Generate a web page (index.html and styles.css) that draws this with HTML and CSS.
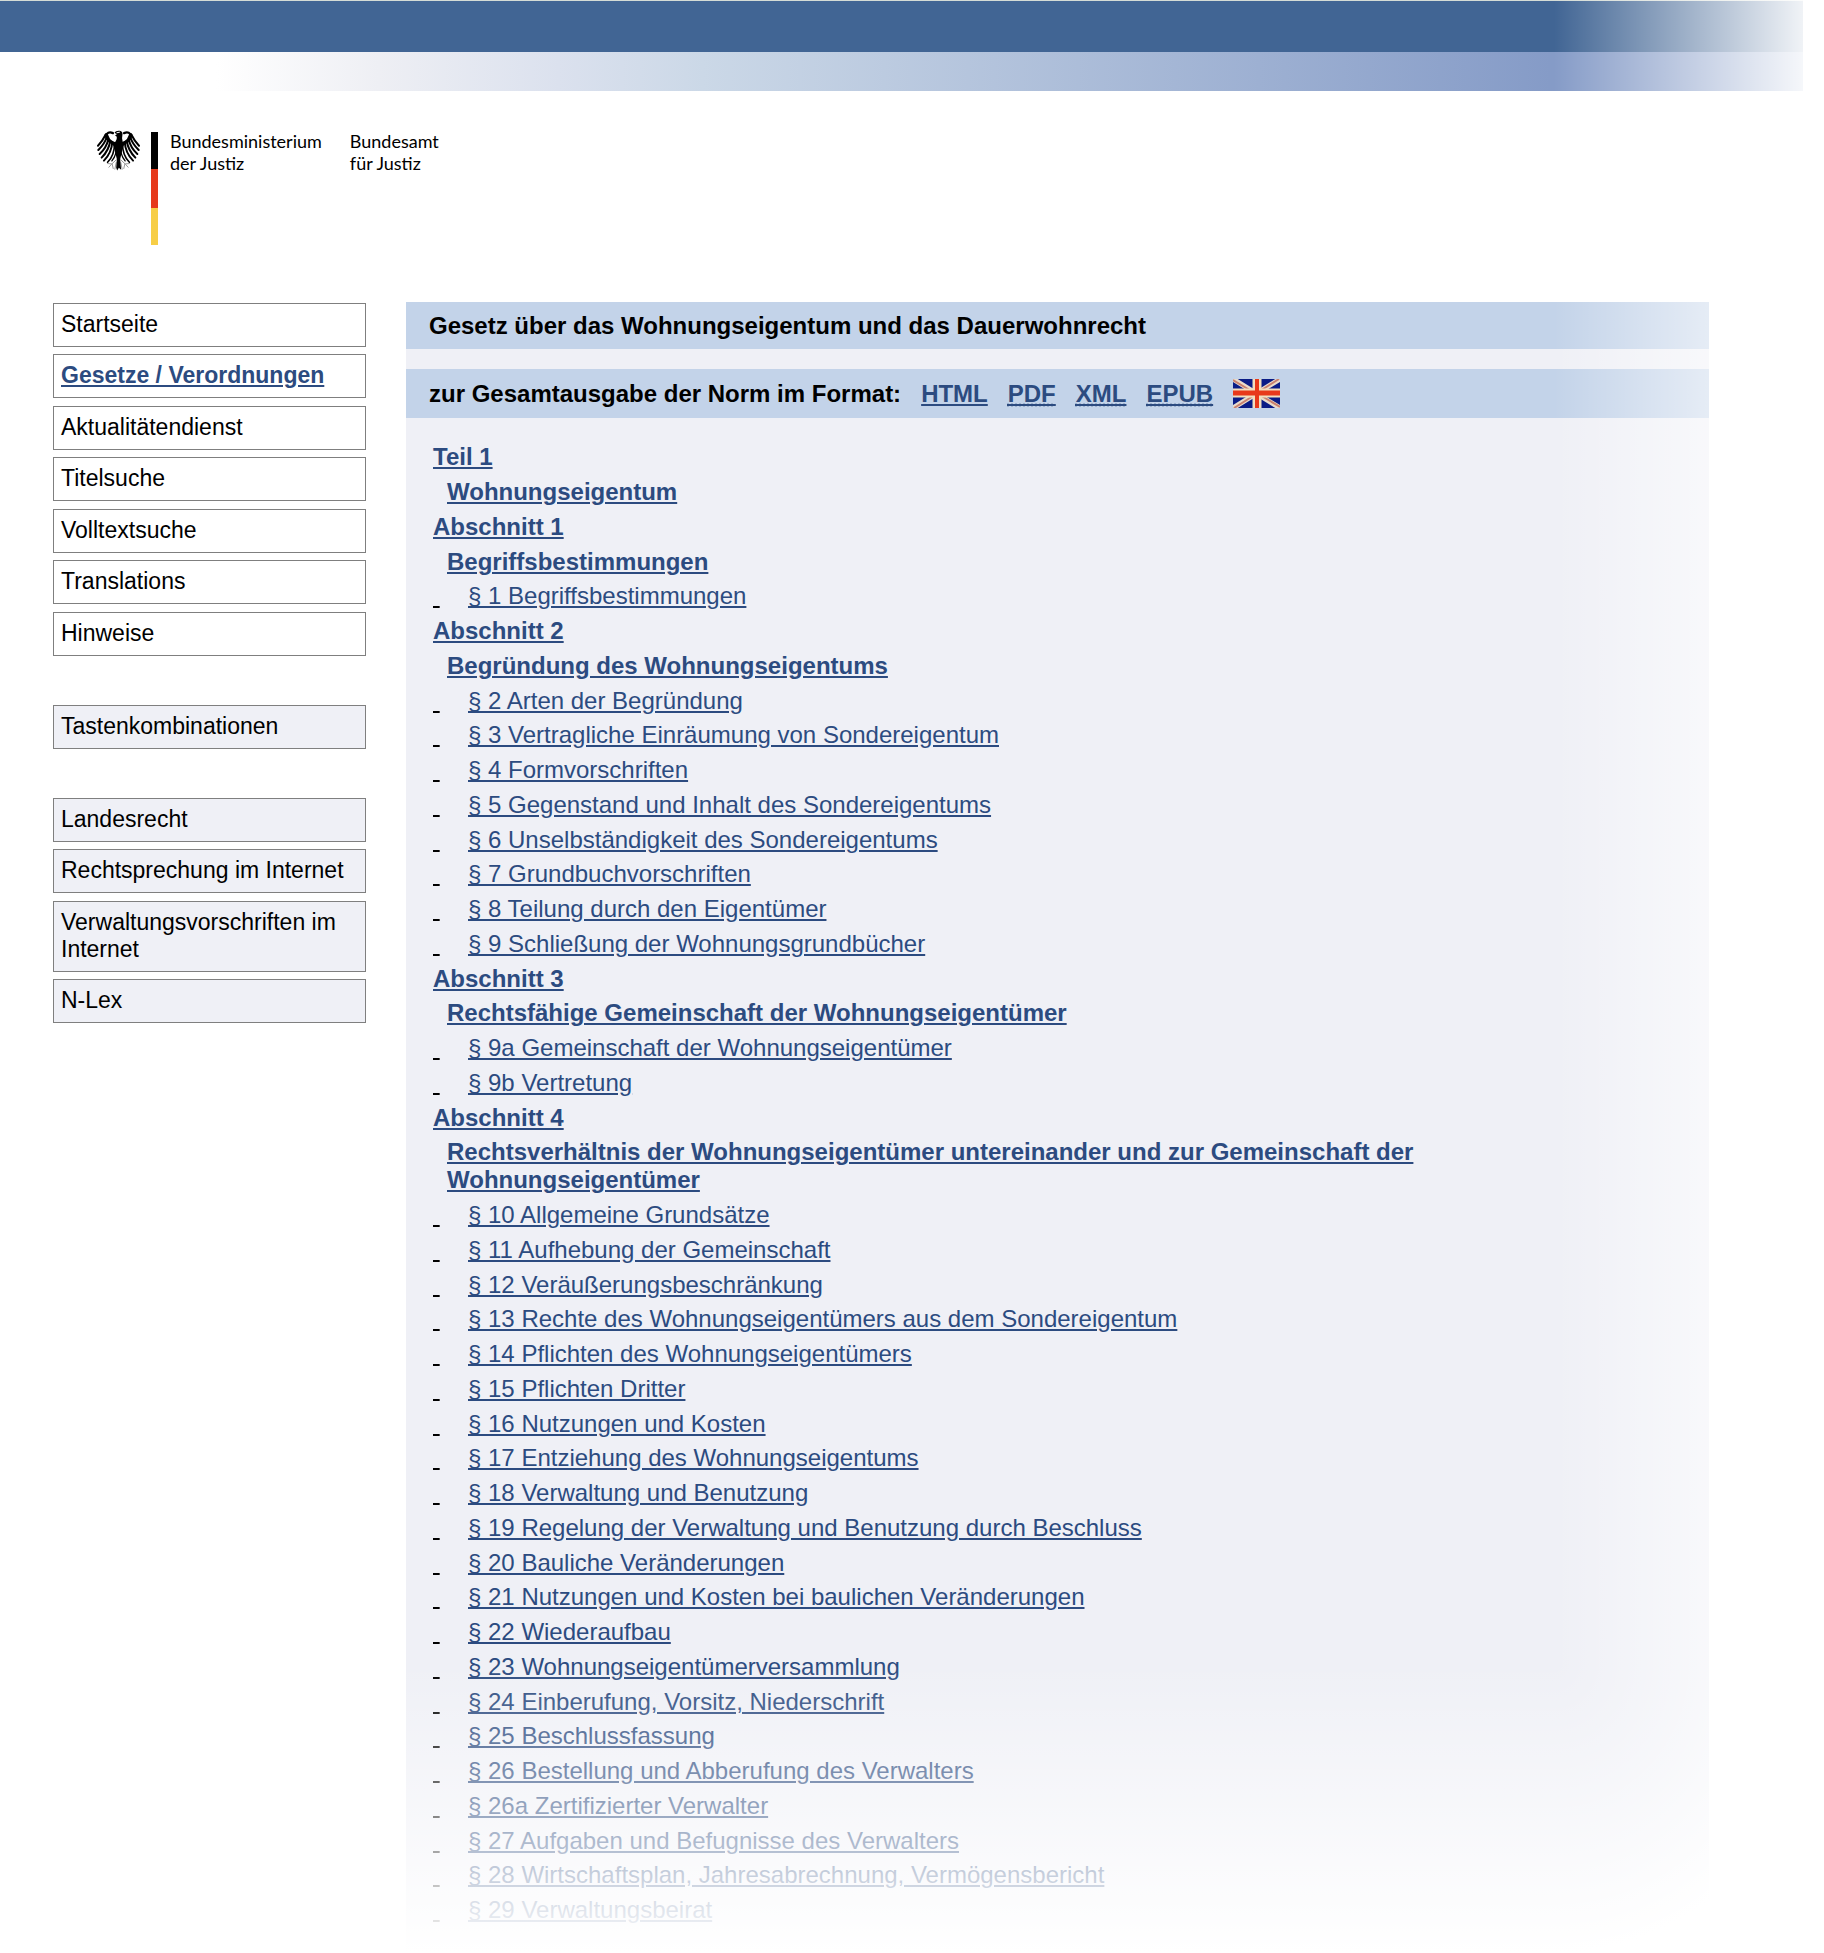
FILE: index.html
```html
<!DOCTYPE html>
<html lang="de">
<head>
    <meta charset="UTF-8">
    <meta name="viewport" content="width=device-width, initial-scale=1.0">
    <title>WEG - Gesetz über das Wohnungseigentum und das Dauerwohnrecht</title>
    <link rel="stylesheet" href="styles.css">
</head>
<body>
<div class="page">
    <div class="topbar"></div>
    <div class="topbar-light"></div>

    <header class="header">
        <svg class="eagle" viewBox="0 0 130 123" aria-hidden="true">
            <g id="wing" fill="none" stroke="#000" stroke-linecap="round">
                <path d="M48 9C38 4 28 8 27 18C29 30 40 38 58 40" stroke-width="7"/>
                <path d="M26 14C19 28 12 38 3 47" stroke-width="6"/>
                <path d="M29 22C24 38 14 50 4 60" stroke-width="6"/>
                <path d="M34 28C30 46 20 61 8 72" stroke-width="6"/>
                <path d="M40 32C37 54 27 70 14 83" stroke-width="6"/>
                <path d="M46 36C45 60 35 78 21 92" stroke-width="6"/>
                <path d="M53 40C53 64 45 84 32 97" stroke-width="5"/>
                <path d="M59 42C60 68 55 82 45 93" stroke-width="4"/>
                <path d="M28 14L36 31L52 42L60 56" stroke-width="10"/>
                <path d="M58 90L45 102L32 101M45 102L36 112M46 103L49 116M58 98L54 118" stroke="#999" stroke-width="3"/>
            </g>
            <use href="#wing" transform="translate(130 0) scale(-1 1)"/>
            <path d="M53 8C56 1 70 -1 76 6C79 12 75 20 76 26L79 42L76 62L70 88L73 120L66 114L61 122L58 114L60 88L54 62L52 42L59 28C61 22 60 17 54 16L60 12Z"/>
            <path d="M59 8L69 6" stroke="#fff" stroke-width="3"/>
        </svg>
        <div class="flag-bar"></div>
        <div class="office">Bundesministerium<br>der Justiz</div>
        <div class="office">Bundesamt<br>für Justiz</div>
    </header>

    <div class="columns">
        <nav class="sidebar">
            <ul class="menu">
                <li><a href="#">Startseite</a></li>
                <li><a href="#" class="current">Gesetze / Verordnungen</a></li>
                <li><a href="#">Aktualitätendienst</a></li>
                <li><a href="#">Titelsuche</a></li>
                <li><a href="#">Volltextsuche</a></li>
                <li><a href="#">Translations</a></li>
                <li><a href="#">Hinweise</a></li>
            </ul>
            <ul class="menu grey">
                <li><a href="#">Tastenkombinationen</a></li>
            </ul>
            <ul class="menu grey">
                <li><a href="#">Landesrecht</a></li>
                <li><a href="#">Rechtsprechung im Internet</a></li>
                <li><a href="#">Verwaltungsvorschriften im Internet</a></li>
                <li><a href="#">N-Lex</a></li>
            </ul>
        </nav>

        <main class="content">
            <h1 class="band">Gesetz über das Wohnungseigentum und das Dauerwohnrecht</h1>
            <h2 class="band formats">
                <span>zur Gesamtausgabe der Norm im Format:</span>
                <a href="#">HTML</a>
                <a href="#"><abbr>PDF</abbr></a>
                <a href="#"><abbr>XML</abbr></a>
                <a href="#"><abbr>EPUB</abbr></a>
                <a href="#" class="flag" aria-label="English">
                    <svg viewBox="0 0 47 29">
                        <rect width="47" height="29" fill="#0a1c86"/>
                        <path d="M0 0L47 29M47 0L0 29" stroke="#e9dccb" stroke-width="5"/>
                        <path d="M0 1L20 13M47 28L27 16M46 0L27 12M1 29L20 17" stroke="#c9806f" stroke-width="2"/>
                        <path d="M24 0V29M0 14H47" stroke="#f1dfbf" stroke-width="9"/>
                        <path d="M24 0V29" stroke="#e8391b" stroke-width="4"/>
                        <path d="M0 14H47" stroke="#e8391b" stroke-width="5"/>
                    </svg>
                </a>
            </h2>

            <ul class="toc">
                <li class="part"><a href="#">Teil 1</a></li>
                <li class="title"><a href="#">Wohnungseigentum</a></li>
                <li class="part"><a href="#">Abschnitt 1</a></li>
                <li class="title"><a href="#">Begriffsbestimmungen</a></li>
                <li class="norm"><u>&nbsp;</u><a href="#">§ 1 Begriffsbestimmungen</a></li>
                <li class="part"><a href="#">Abschnitt 2</a></li>
                <li class="title"><a href="#">Begründung des Wohnungseigentums</a></li>
                <li class="norm"><u>&nbsp;</u><a href="#">§ 2 Arten der Begründung</a></li>
                <li class="norm"><u>&nbsp;</u><a href="#">§ 3 Vertragliche Einräumung von Sondereigentum</a></li>
                <li class="norm"><u>&nbsp;</u><a href="#">§ 4 Formvorschriften</a></li>
                <li class="norm"><u>&nbsp;</u><a href="#">§ 5 Gegenstand und Inhalt des Sondereigentums</a></li>
                <li class="norm"><u>&nbsp;</u><a href="#">§ 6 Unselbständigkeit des Sondereigentums</a></li>
                <li class="norm"><u>&nbsp;</u><a href="#">§ 7 Grundbuchvorschriften</a></li>
                <li class="norm"><u>&nbsp;</u><a href="#">§ 8 Teilung durch den Eigentümer</a></li>
                <li class="norm"><u>&nbsp;</u><a href="#">§ 9 Schließung der Wohnungsgrundbücher</a></li>
                <li class="part"><a href="#">Abschnitt 3</a></li>
                <li class="title"><a href="#">Rechtsfähige Gemeinschaft der Wohnungseigentümer</a></li>
                <li class="norm"><u>&nbsp;</u><a href="#">§ 9a Gemeinschaft der Wohnungseigentümer</a></li>
                <li class="norm"><u>&nbsp;</u><a href="#">§ 9b Vertretung</a></li>
                <li class="part"><a href="#">Abschnitt 4</a></li>
                <li class="title"><a href="#">Rechtsverhältnis der Wohnungseigentümer untereinander und zur Gemeinschaft der Wohnungseigentümer</a></li>
                <li class="norm"><u>&nbsp;</u><a href="#">§ 10 Allgemeine Grundsätze</a></li>
                <li class="norm"><u>&nbsp;</u><a href="#">§ 11 Aufhebung der Gemeinschaft</a></li>
                <li class="norm"><u>&nbsp;</u><a href="#">§ 12 Veräußerungsbeschränkung</a></li>
                <li class="norm"><u>&nbsp;</u><a href="#">§ 13 Rechte des Wohnungseigentümers aus dem Sondereigentum</a></li>
                <li class="norm"><u>&nbsp;</u><a href="#">§ 14 Pflichten des Wohnungseigentümers</a></li>
                <li class="norm"><u>&nbsp;</u><a href="#">§ 15 Pflichten Dritter</a></li>
                <li class="norm"><u>&nbsp;</u><a href="#">§ 16 Nutzungen und Kosten</a></li>
                <li class="norm"><u>&nbsp;</u><a href="#">§ 17 Entziehung des Wohnungseigentums</a></li>
                <li class="norm"><u>&nbsp;</u><a href="#">§ 18 Verwaltung und Benutzung</a></li>
                <li class="norm"><u>&nbsp;</u><a href="#">§ 19 Regelung der Verwaltung und Benutzung durch Beschluss</a></li>
                <li class="norm"><u>&nbsp;</u><a href="#">§ 20 Bauliche Veränderungen</a></li>
                <li class="norm"><u>&nbsp;</u><a href="#">§ 21 Nutzungen und Kosten bei baulichen Veränderungen</a></li>
                <li class="norm"><u>&nbsp;</u><a href="#">§ 22 Wiederaufbau</a></li>
                <li class="norm"><u>&nbsp;</u><a href="#">§ 23 Wohnungseigentümerversammlung</a></li>
                <li class="norm"><u>&nbsp;</u><a href="#">§ 24 Einberufung, Vorsitz, Niederschrift</a></li>
                <li class="norm"><u>&nbsp;</u><a href="#">§ 25 Beschlussfassung</a></li>
                <li class="norm"><u>&nbsp;</u><a href="#">§ 26 Bestellung und Abberufung des Verwalters</a></li>
                <li class="norm"><u>&nbsp;</u><a href="#">§ 26a Zertifizierter Verwalter</a></li>
                <li class="norm"><u>&nbsp;</u><a href="#">§ 27 Aufgaben und Befugnisse des Verwalters</a></li>
                <li class="norm"><u>&nbsp;</u><a href="#">§ 28 Wirtschaftsplan, Jahresabrechnung, Vermögensbericht</a></li>
                <li class="norm"><u>&nbsp;</u><a href="#">§ 29 Verwaltungsbeirat</a></li>
            </ul>
        </main>
    </div>
</div>
</body>
</html>
```
FILE: styles.css
```css
* {
    margin: 0;
    padding: 0;
    box-sizing: border-box;
}

body {
    background-color: #fff;
    color: #000;
    font-family: "Liberation Sans", Arial, sans-serif;
    font-size: 23px;
    line-height: 27px;
}

ul {
    list-style: none;
}

.page {
    position: relative;
    display: flex;
    flex-direction: column;
    min-height: 100vh;
}

/* fades the page out to the right and to the bottom */
.page::after {
    content: "";
    position: absolute;
    inset: 0;
    pointer-events: none;
    background:
        linear-gradient(to right, transparent, #fff) right top / 270px calc(100% - 290px) no-repeat,
        linear-gradient(to bottom, transparent, #fff) left bottom / calc(100% - 270px) 290px no-repeat,
        radial-gradient(100% 100% at 0 0, transparent, #fff) right bottom / 270px 290px no-repeat;
}

.topbar {
    height: 52px;
    margin-right: 21px;
    background-color: #416594;
    border-top: 1px solid #d5dcd6;
}

.topbar-light {
    height: 39px;
    margin-right: 21px;
    background: linear-gradient(to right, #fff 12%, #eeeff4 21%, #dbe1ee 31%, #cbd8e7 39%, #859bc7 86%);
}

.header {
    display: flex;
    align-items: flex-start;
    padding: 39px 97px 57px;
}

.eagle {
    width: 43px;
    height: 41px;
}

.flag-bar {
    width: 7px;
    height: 113px;
    margin: 2px 12px 0 11px;
    background: linear-gradient(#000 0 33%, #e6391b 33% 67%, #f7ce46 67%);
}

.office {
    margin-right: 28px;
    font-family: Lato, "Open Sans", sans-serif;
    font-size: 18px;
    line-height: 22px;
}

.columns {
    display: flex;
    flex: 1;
    gap: 40px;
    padding: 0 115px 0 53px;
}

.sidebar {
    flex: 0 0 313px;
    padding-top: 1px;
}

.menu {
    margin-bottom: 49px;
}

.menu li + li {
    margin-top: 8px;
}

.menu li:nth-child(even) {
    margin-top: 7px;
}

.menu a {
    display: block;
    padding: 7px 7px 8px;
    border: 1px solid #7f7f7f;
    color: #000;
    text-decoration: none;
}

.menu.grey a {
    background-color: #eff0f6;
}

.menu a.current {
    color: #2c4b80;
    font-weight: bold;
    text-decoration: underline;
}

.content {
    flex: 1;
    background-color: #eff0f6;
}

.content a {
    color: #2c4b80;
}

.band {
    padding: 10px 23px;
    background-color: #c3d3e9;
    font-size: 24px;
    font-weight: bold;
}

.formats {
    display: flex;
    align-items: center;
    gap: 20px;
    margin-top: 20px;
}

.formats abbr {
    text-decoration: underline dotted;
}

.flag svg {
    display: block;
    width: 47px;
    height: 29px;
}

.toc {
    padding: 22px 60px 0 27px;
    font-size: 24px;
    line-height: 28px;
}

.toc li {
    padding: 3px 0 4px;
}

.toc li:nth-child(4n) {
    padding-bottom: 3px;
}

.part,
.title {
    font-weight: bold;
}

.toc .title {
    padding-left: 14px;
}

.norm {
    display: flex;
}

.norm u {
    flex: 0 0 35px;
}
```
